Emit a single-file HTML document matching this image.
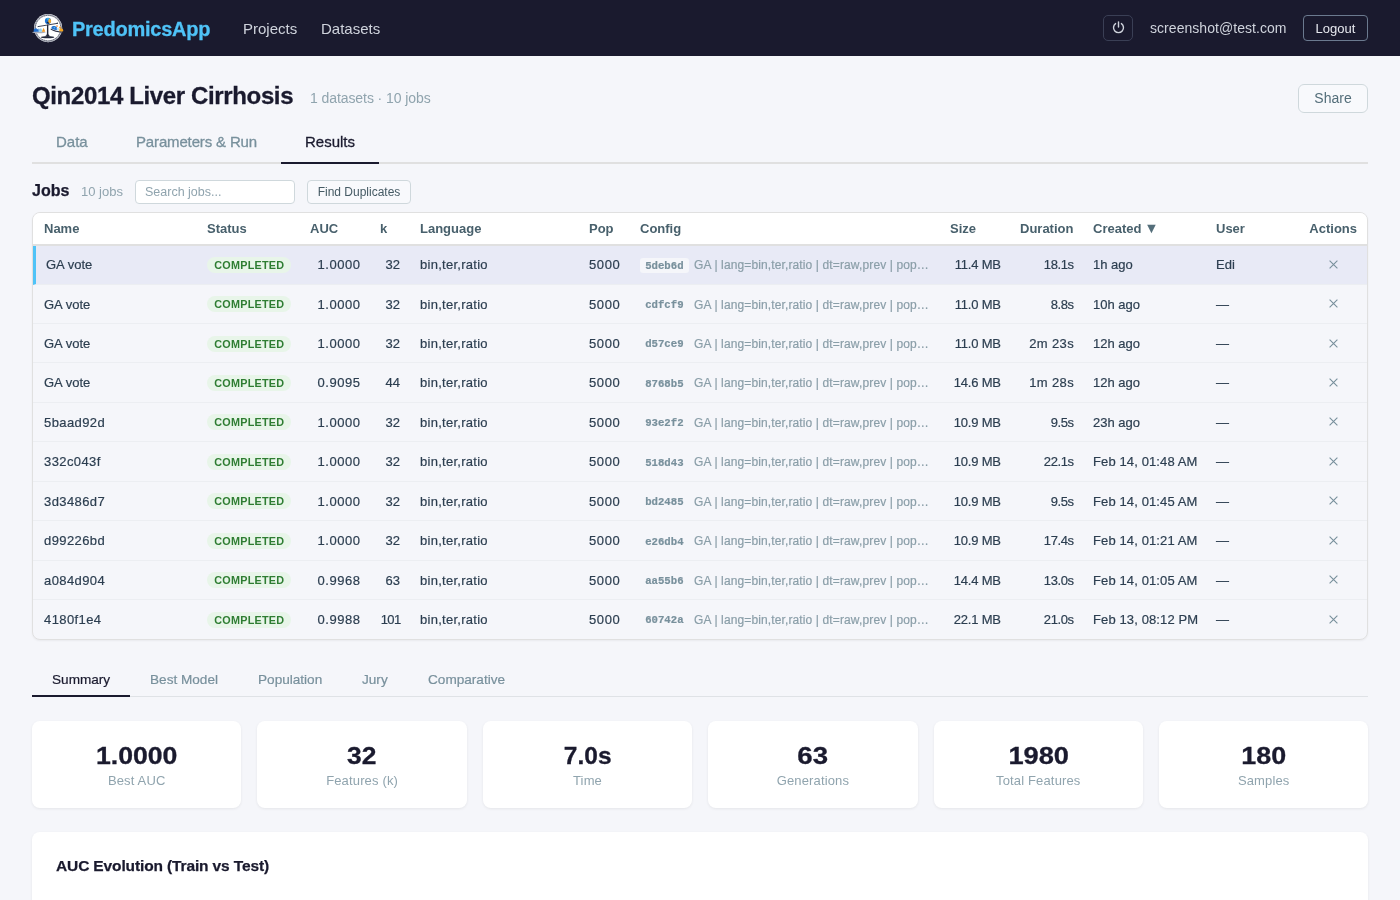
<!DOCTYPE html>
<html lang="en">
<head>
<meta charset="utf-8">
<title>PredomicsApp</title>
<style>
*{box-sizing:border-box;margin:0;padding:0}
html,body{width:1400px;height:900px;overflow:hidden}
body{font-family:"Liberation Sans",sans-serif;background:#f5f6fa;color:#1a1a2e;position:relative;will-change:transform}
.abs{position:absolute;white-space:nowrap}
/* NAV */
.nav{position:absolute;left:0;top:0;width:1400px;height:56px;background:#1a1a2e}
.brand{-webkit-text-stroke:.3px;left:72px;top:17px;font-size:20px;line-height:24px;font-weight:bold;color:#4fc3f7;letter-spacing:-.25px}
.navlink{top:19px;font-size:15px;line-height:20px;color:#cfd3dc}
.pwr{left:1103px;top:15px;width:30px;height:26px;border:1px solid #3a3f55;border-radius:5px}
.email{left:1150px;top:18.3px;letter-spacing:.05px;font-size:14px;line-height:20px;color:#cfd3dc}
.logout{left:1303px;top:15px;width:65px;height:26px;border:1px solid #6b7a8f;border-radius:4px;color:#e6e8ee;font-size:13px;line-height:25px;text-align:center}
/* HEADER */
.title{-webkit-text-stroke:.3px;left:32px;top:80.5px;font-size:24px;line-height:30px;font-weight:bold;color:#1a1a2e;letter-spacing:-.36px}
.sub{left:310px;top:89px;font-size:14px;line-height:18px;color:#90a4ae;letter-spacing:-.08px}
.share{left:1298px;top:84px;width:70px;height:29px;border:1px solid #cfd8dc;border-radius:6px;color:#546e7a;font-size:14px;line-height:27px;text-align:center;background:#f8f9fc}
/* TABS */
.tabline{position:absolute;left:32px;top:162px;width:1336px;height:2px;background:#e0e0e0}
.tabact{position:absolute;left:281px;top:162px;width:98px;height:2px;background:#1a1a2e}
.tab{top:132px;font-size:15px;line-height:20px;color:#78909c;-webkit-text-stroke:.3px}
.tab.on{color:#1a1a2e}
/* JOBS BAR */
.jobs{-webkit-text-stroke:.25px;left:32px;top:181px;font-size:16px;line-height:20px;font-weight:bold;color:#1a1a2e}
.jobsn{left:81px;top:184px;font-size:13px;line-height:16px;color:#90a4ae}
.search{left:135px;top:180px;width:160px;height:24px;border:1px solid #cfd8dc;border-radius:4px;background:#fff;color:#90a4ae;font-size:12.5px;line-height:22px;padding-left:9px}
.dup{left:307px;top:180px;width:104px;height:24px;border:1px solid #cfd8dc;border-radius:4px;background:#f8f9fc;color:#455a64;font-size:12px;line-height:22px;text-align:center}
/* TABLE */
.tbl{position:absolute;left:32px;top:212px;width:1336px;height:427.5px;border:1px solid #e0e0e0;border-radius:8px;background:#f5f6fa;overflow:hidden;box-shadow:0 1px 2px rgba(0,0,0,.05)}
.thead{position:relative;height:32.5px;background:#fff;border-bottom:2px solid #e0e0e0;font-weight:bold;font-size:13px;color:#48606c}
.thead .c{top:7.5px}
.tr{-webkit-text-stroke:.2px;position:relative;height:39.45px;border-bottom:1px solid #eceef2;font-size:13px;color:#2c3e50}
.tr:last-child{border-bottom:none}
.tr.sel{background:#e8eaf6;border-left:3px solid #4fc3f7;height:39.1px}
.tr:not(.sel) .c{top:11.95px}
.tr.sel>*{margin-left:-3px}
.tr.sel .nm{margin-left:-1px}
.c{position:absolute;top:11px;line-height:16px;white-space:nowrap}
.c.r{text-align:right}
.nm{left:11px}
.badge{position:absolute;left:174px;top:11.5px;width:84px;height:16px;border-radius:8px;background:#e8f5e9;color:#2e7d32;font-weight:bold;font-size:10.8px;line-height:16.6px;text-align:center;letter-spacing:.25px;padding-left:.5px;-webkit-text-stroke:0}
.hash{position:absolute;left:607px;top:12.3px;width:48.7px;height:15.1px;border-radius:3px;font-family:"Liberation Mono",monospace;font-size:10.66px;line-height:16.4px;text-align:center;color:#78909c;font-weight:bold}
.sel .hash{background:#f5f6fa}
.auc{right:1006.5px;letter-spacing:.55px}
.lang{left:387px;letter-spacing:.27px}
.pop{left:556px;letter-spacing:.6px}
.cfg{left:661px;font-size:12px;color:#8a9ea8;letter-spacing:.125px}
.x{position:absolute;left:1296px;top:14.5px;fill:none;stroke:#78909c;stroke-width:1.1}
.hx{letter-spacing:.4px}
.dt{letter-spacing:.12px}
.arr{font-size:14.5px;line-height:1;position:relative;top:0px;margin-left:-.8px;color:#546e7a}
/* SUBTABS */
.subline{position:absolute;left:32px;top:696px;width:1336px;height:1px;background:#dfe2e6}
.subact{position:absolute;left:32px;top:695px;width:98px;height:2px;background:#1a1a2e}
.stab{top:669.6px;font-size:13.6px;line-height:20px;color:#78909c;-webkit-text-stroke:.2px}
.stab.on{color:#1a1a2e}
/* CARDS */
.card{position:absolute;top:721px;width:209.4px;height:86.5px;background:#fff;border-radius:8px;box-shadow:0 1px 3px rgba(0,0,0,.07);text-align:center}
.val{-webkit-text-stroke:.3px;position:absolute;left:0;right:0;top:19.7px;font-size:24px;line-height:30px;font-weight:bold;color:#1a1a2e}
.lab{position:absolute;left:0;right:0;top:51.7px;font-size:13px;line-height:16px;color:#90a4ae;letter-spacing:.15px}
/* CHART */
.chart{position:absolute;left:32px;top:832px;width:1336px;height:120px;background:#fff;border-radius:8px;box-shadow:0 1px 3px rgba(0,0,0,.07)}
.ctitle{-webkit-text-stroke:.25px;position:absolute;left:24px;top:23.7px;font-size:15.5px;line-height:20px;font-weight:bold;color:#1a1a2e;white-space:nowrap;letter-spacing:-.13px}
</style>
</head>
<body>
<div class="nav">
  <svg class="abs" style="left:32px;top:12px;overflow:visible" width="32" height="32" viewBox="0 0 32 32">
    <circle cx="16.1" cy="16.1" r="14.1" fill="#fff"/>
    <circle cx="16.1" cy="16.1" r="13.6" fill="none" stroke="#9a9eac" stroke-width="0.9"/>
    <circle cx="16.1" cy="16.1" r="12.7" fill="none" stroke="#2f3448" stroke-width="0.8" stroke-dasharray="1.5 0.4"/>
    <path d="M15 12.4 L16.3 12.4 L16.4 22 Q16.8 23.8 18.6 24.3 L12.6 24.3 Q14.6 23.8 14.9 22 Z" fill="#23283a"/>
    <ellipse cx="15.6" cy="25.2" rx="6.7" ry="1.1" fill="#23283a"/>
    <path d="M6 14.6 L25.2 11.4" stroke="#2b3044" stroke-width="0.9" fill="none" stroke-linecap="round"/>
    <circle cx="25.3" cy="11.2" r="0.7" fill="#2b3044"/>
    <circle cx="16" cy="8.9" r="3.1" fill="#1f74d4"/>
    <path d="M16.6 5.9 A3.1 3.1 0 0 1 17.2 11.8 L16.2 9.2 Z" fill="#f7a928"/>
    <path d="M14.2 6.5 Q16 5.6 17.4 6.6 L16 8.6 Z" fill="#35b3ea"/>
    <path d="M14.4 10.6 Q15.8 12.2 17 11.6 L16 9.6 Z" fill="#20253a"/>
    <ellipse cx="6.9" cy="20.3" rx="6.9" ry="0.9" fill="#a9adba"/>
    <path d="M1.6 19.8 L1.8 17.6 L3 16.4 L4.6 16.3 L5 17.4 L6.4 16.6 L7 19.8 Z" fill="#1f6fd0"/>
    <path d="M6.6 19.8 L7 17 L9.2 16.2 L10.6 19.8 Z" fill="#8fd0f2"/>
    <path d="M9.8 19.8 L11.6 15.8 L13.3 19.8 Z" fill="#f59a23"/>
    <path d="M18.8 16.6 Q24 19.8 31.8 19.6 L31.2 20.4 Q23.6 20.8 18.6 17.4 Z" fill="#2b3044"/>
    <path d="M19.4 16.5 L19.6 14.8 L21 13.9 L22.8 14 L24.4 14.8 L25.4 16.4 L25.6 18.3 Q22 18.1 19.4 16.5 Z" fill="#1f6fd0"/>
    <path d="M21.4 15.2 L22.6 14.8 L23.4 15.8 L22.4 16.6 Z" fill="#5bb8ee"/>
    <path d="M24.6 16 L26.6 15.8 L27.2 17.4 L26.4 18.6 L25 18.4 Z" fill="#bfe3f7"/>
    <circle cx="25" cy="14.1" r="0.8" fill="#f07f24"/>
    <circle cx="28" cy="15.4" r="0.9" fill="#f59a23"/>
    <path d="M27.4 16.8 L29.2 16.3 L30.8 16.9 L31.3 18.4 L30.8 19.5 L27.2 19.2 Z" fill="#f5a623"/>
  </svg>
  <div class="abs brand">PredomicsApp</div>
  <div class="abs navlink" style="left:243px">Projects</div>
  <div class="abs navlink" style="left:321px">Datasets</div>
  <div class="abs pwr">
    <svg style="position:absolute;left:7.8px;top:5.3px" width="13" height="13" viewBox="0 0 12 12" fill="none" stroke="#cfd3dc" stroke-width="1.3" stroke-linecap="round"><path d="M6 0.8 V5.6"/><path d="M3.3 2.4 A4.6 4.6 0 1 0 8.7 2.4"/></svg>
  </div>
  <div class="abs email">screenshot@test.com</div>
  <div class="abs logout">Logout</div>
</div>

<div class="abs title">Qin2014 Liver Cirrhosis</div>
<div class="abs sub">1 datasets · 10 jobs</div>
<div class="abs share">Share</div>

<div class="tabline"></div><div class="tabact"></div>
<div class="abs tab" style="left:56px">Data</div>
<div class="abs tab" style="left:136px;letter-spacing:-.15px">Parameters &amp; Run</div>
<div class="abs tab on" style="left:305px">Results</div>

<div class="abs jobs">Jobs</div>
<div class="abs jobsn">10 jobs</div>
<div class="abs search">Search jobs...</div>
<div class="abs dup">Find Duplicates</div>

<!--TABLE_START-->
<div class="tbl">
<div class="thead"><span class="c" style="left:11px">Name</span><span class="c" style="left:174px">Status</span><span class="c" style="left:277px">AUC</span><span class="c" style="left:347px">k</span><span class="c" style="left:387px">Language</span><span class="c" style="left:556px">Pop</span><span class="c" style="left:607px">Config</span><span class="c" style="left:917px">Size</span><span class="c" style="left:987px">Duration</span><span class="c" style="left:1060px">Created <span class="arr">▼</span></span><span class="c" style="left:1183px">User</span><span class="c r" style="right:10px">Actions</span></div>
<div class="tr sel"><span class="c nm">GA vote</span><span class="badge">COMPLETED</span><span class="c r auc">1.0000</span><span class="c r" style="right:967px">32</span><span class="c lang">bin,ter,ratio</span><span class="c pop">5000</span><span class="hash">5deb6d</span><span class="c cfg">GA | lang=bin,ter,ratio | dt=raw,prev | pop…</span><span class="c r" style="right:366px;letter-spacing:-.2px;margin-right:.2px">11.4 MB</span><span class="c r" style="right:293px;letter-spacing:-.4px;margin-right:.4px">18.1s</span><span class="c" style="left:1060px">1h ago</span><span class="c" style="left:1183px">Edi</span><svg class="x" width="9" height="9" viewBox="0 0 9 9"><path d="M0.6 0.6 L8.4 8.4 M8.4 0.6 L0.6 8.4"/></svg></div>
<div class="tr"><span class="c nm">GA vote</span><span class="badge">COMPLETED</span><span class="c r auc">1.0000</span><span class="c r" style="right:967px">32</span><span class="c lang">bin,ter,ratio</span><span class="c pop">5000</span><span class="hash">cdfcf9</span><span class="c cfg">GA | lang=bin,ter,ratio | dt=raw,prev | pop…</span><span class="c r" style="right:366px;letter-spacing:-.2px;margin-right:.2px">11.0 MB</span><span class="c r" style="right:293px;letter-spacing:-.4px;margin-right:.4px">8.8s</span><span class="c" style="left:1060px">10h ago</span><span class="c" style="left:1183px">—</span><svg class="x" width="9" height="9" viewBox="0 0 9 9"><path d="M0.6 0.6 L8.4 8.4 M8.4 0.6 L0.6 8.4"/></svg></div>
<div class="tr"><span class="c nm">GA vote</span><span class="badge">COMPLETED</span><span class="c r auc">1.0000</span><span class="c r" style="right:967px">32</span><span class="c lang">bin,ter,ratio</span><span class="c pop">5000</span><span class="hash">d57ce9</span><span class="c cfg">GA | lang=bin,ter,ratio | dt=raw,prev | pop…</span><span class="c r" style="right:366px;letter-spacing:-.2px;margin-right:.2px">11.0 MB</span><span class="c r" style="right:293px;letter-spacing:.35px">2m 23s</span><span class="c" style="left:1060px">12h ago</span><span class="c" style="left:1183px">—</span><svg class="x" width="9" height="9" viewBox="0 0 9 9"><path d="M0.6 0.6 L8.4 8.4 M8.4 0.6 L0.6 8.4"/></svg></div>
<div class="tr"><span class="c nm">GA vote</span><span class="badge">COMPLETED</span><span class="c r auc">0.9095</span><span class="c r" style="right:967px">44</span><span class="c lang">bin,ter,ratio</span><span class="c pop">5000</span><span class="hash">8768b5</span><span class="c cfg">GA | lang=bin,ter,ratio | dt=raw,prev | pop…</span><span class="c r" style="right:366px;letter-spacing:-.2px;margin-right:.2px">14.6 MB</span><span class="c r" style="right:293px;letter-spacing:.35px">1m 28s</span><span class="c" style="left:1060px">12h ago</span><span class="c" style="left:1183px">—</span><svg class="x" width="9" height="9" viewBox="0 0 9 9"><path d="M0.6 0.6 L8.4 8.4 M8.4 0.6 L0.6 8.4"/></svg></div>
<div class="tr"><span class="c nm hx">5baad92d</span><span class="badge">COMPLETED</span><span class="c r auc">1.0000</span><span class="c r" style="right:967px">32</span><span class="c lang">bin,ter,ratio</span><span class="c pop">5000</span><span class="hash">93e2f2</span><span class="c cfg">GA | lang=bin,ter,ratio | dt=raw,prev | pop…</span><span class="c r" style="right:366px;letter-spacing:-.2px;margin-right:.2px">10.9 MB</span><span class="c r" style="right:293px;letter-spacing:-.4px;margin-right:.4px">9.5s</span><span class="c" style="left:1060px">23h ago</span><span class="c" style="left:1183px">—</span><svg class="x" width="9" height="9" viewBox="0 0 9 9"><path d="M0.6 0.6 L8.4 8.4 M8.4 0.6 L0.6 8.4"/></svg></div>
<div class="tr"><span class="c nm hx">332c043f</span><span class="badge">COMPLETED</span><span class="c r auc">1.0000</span><span class="c r" style="right:967px">32</span><span class="c lang">bin,ter,ratio</span><span class="c pop">5000</span><span class="hash">518d43</span><span class="c cfg">GA | lang=bin,ter,ratio | dt=raw,prev | pop…</span><span class="c r" style="right:366px;letter-spacing:-.2px;margin-right:.2px">10.9 MB</span><span class="c r" style="right:293px;letter-spacing:-.4px;margin-right:.4px">22.1s</span><span class="c dt" style="left:1060px">Feb 14, 01:48 AM</span><span class="c" style="left:1183px">—</span><svg class="x" width="9" height="9" viewBox="0 0 9 9"><path d="M0.6 0.6 L8.4 8.4 M8.4 0.6 L0.6 8.4"/></svg></div>
<div class="tr"><span class="c nm hx">3d3486d7</span><span class="badge">COMPLETED</span><span class="c r auc">1.0000</span><span class="c r" style="right:967px">32</span><span class="c lang">bin,ter,ratio</span><span class="c pop">5000</span><span class="hash">bd2485</span><span class="c cfg">GA | lang=bin,ter,ratio | dt=raw,prev | pop…</span><span class="c r" style="right:366px;letter-spacing:-.2px;margin-right:.2px">10.9 MB</span><span class="c r" style="right:293px;letter-spacing:-.4px;margin-right:.4px">9.5s</span><span class="c dt" style="left:1060px">Feb 14, 01:45 AM</span><span class="c" style="left:1183px">—</span><svg class="x" width="9" height="9" viewBox="0 0 9 9"><path d="M0.6 0.6 L8.4 8.4 M8.4 0.6 L0.6 8.4"/></svg></div>
<div class="tr"><span class="c nm hx">d99226bd</span><span class="badge">COMPLETED</span><span class="c r auc">1.0000</span><span class="c r" style="right:967px">32</span><span class="c lang">bin,ter,ratio</span><span class="c pop">5000</span><span class="hash">e26db4</span><span class="c cfg">GA | lang=bin,ter,ratio | dt=raw,prev | pop…</span><span class="c r" style="right:366px;letter-spacing:-.2px;margin-right:.2px">10.9 MB</span><span class="c r" style="right:293px;letter-spacing:-.4px;margin-right:.4px">17.4s</span><span class="c dt" style="left:1060px">Feb 14, 01:21 AM</span><span class="c" style="left:1183px">—</span><svg class="x" width="9" height="9" viewBox="0 0 9 9"><path d="M0.6 0.6 L8.4 8.4 M8.4 0.6 L0.6 8.4"/></svg></div>
<div class="tr"><span class="c nm hx">a084d904</span><span class="badge">COMPLETED</span><span class="c r auc">0.9968</span><span class="c r" style="right:967px">63</span><span class="c lang">bin,ter,ratio</span><span class="c pop">5000</span><span class="hash">aa55b6</span><span class="c cfg">GA | lang=bin,ter,ratio | dt=raw,prev | pop…</span><span class="c r" style="right:366px;letter-spacing:-.2px;margin-right:.2px">14.4 MB</span><span class="c r" style="right:293px;letter-spacing:-.4px;margin-right:.4px">13.0s</span><span class="c dt" style="left:1060px">Feb 14, 01:05 AM</span><span class="c" style="left:1183px">—</span><svg class="x" width="9" height="9" viewBox="0 0 9 9"><path d="M0.6 0.6 L8.4 8.4 M8.4 0.6 L0.6 8.4"/></svg></div>
<div class="tr"><span class="c nm hx">4180f1e4</span><span class="badge">COMPLETED</span><span class="c r auc">0.9988</span><span class="c r" style="right:967px;letter-spacing:-.6px;margin-right:-.6px">101</span><span class="c lang">bin,ter,ratio</span><span class="c pop">5000</span><span class="hash">60742a</span><span class="c cfg">GA | lang=bin,ter,ratio | dt=raw,prev | pop…</span><span class="c r" style="right:366px;letter-spacing:-.2px;margin-right:.2px">22.1 MB</span><span class="c r" style="right:293px;letter-spacing:-.4px;margin-right:.4px">21.0s</span><span class="c dt" style="left:1060px">Feb 13, 08:12 PM</span><span class="c" style="left:1183px">—</span><svg class="x" width="9" height="9" viewBox="0 0 9 9"><path d="M0.6 0.6 L8.4 8.4 M8.4 0.6 L0.6 8.4"/></svg></div>
</div>
<!--TABLE_END-->
<div class="subline"></div><div class="subact"></div>
<div class="abs stab on" style="left:52px">Summary</div>
<div class="abs stab" style="left:150px">Best Model</div>
<div class="abs stab" style="left:258px">Population</div>
<div class="abs stab" style="left:362px">Jury</div>
<div class="abs stab" style="left:428px">Comparative</div>
<div class="card" style="left:32px"><div class="val" style="transform:scaleX(1.11)">1.0000</div><div class="lab">Best AUC</div></div>
<div class="card" style="left:257.4px"><div class="val" style="transform:scaleX(1.1)">32</div><div class="lab">Features (k)</div></div>
<div class="card" style="left:482.8px"><div class="val" style="transform:scaleX(1.02)">7.0s</div><div class="lab">Time</div></div>
<div class="card" style="left:708.2px"><div class="val" style="transform:scaleX(1.15)">63</div><div class="lab">Generations</div></div>
<div class="card" style="left:933.6px"><div class="val" style="transform:scaleX(1.135)">1980</div><div class="lab">Total Features</div></div>
<div class="card" style="left:1159px"><div class="val" style="transform:scaleX(1.12)">180</div><div class="lab">Samples</div></div>
<div class="chart"><div class="ctitle">AUC Evolution (Train vs Test)</div></div>
</body>
</html>
